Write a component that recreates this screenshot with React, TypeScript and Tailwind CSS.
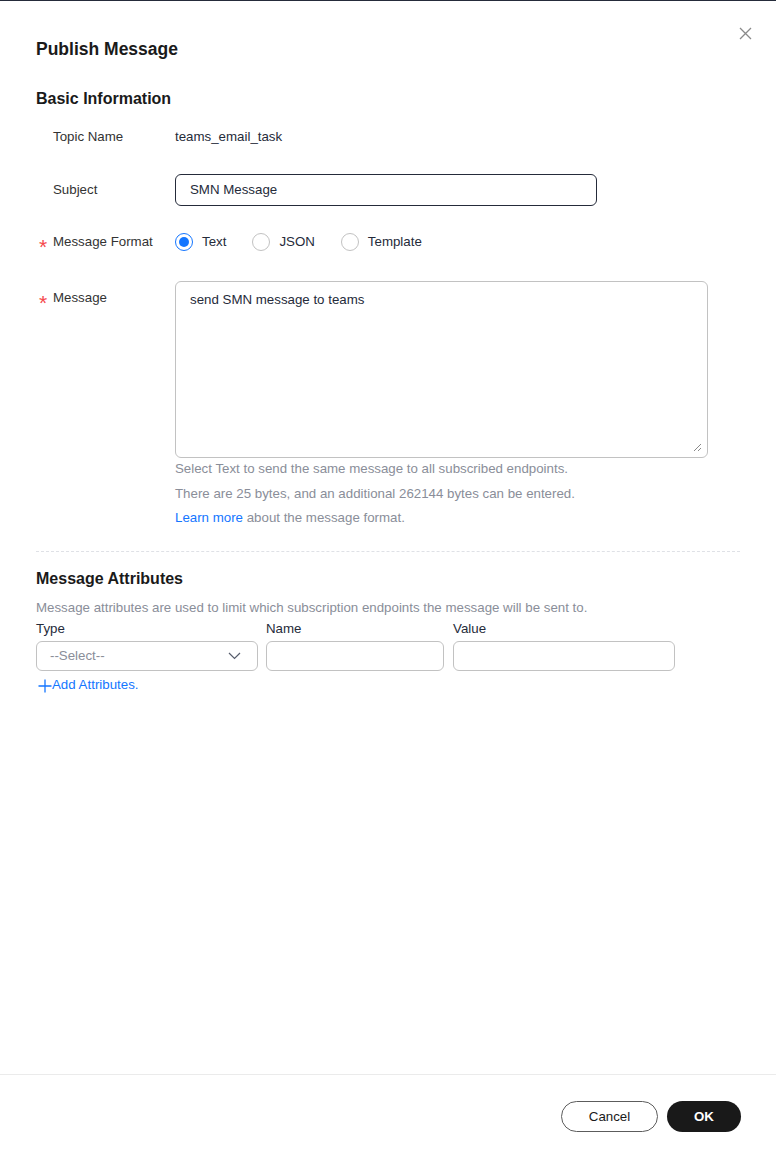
import React from 'react';

const font = { fontFamily: '"Liberation Sans", Arial, sans-serif' };

function Radio({ label, checked }: { label: string; checked?: boolean }) {
    return (
        <label className="flex items-center gap-[9px] mr-[26px]">
            <span
                className={
                    checked
                        ? 'w-[18px] h-[18px] rounded-full border border-[#1476ff] flex items-center justify-center bg-white'
                        : 'w-[18px] h-[18px] rounded-full border border-[#c2c2c2] bg-white'
                }
            >
                {checked && <span className="w-[10px] h-[10px] rounded-full bg-[#1476ff]" />}
            </span>
            <span className="text-[13.3px] text-[#252b3a]">{label}</span>
        </label>
    );
}

function FieldLabel({ text, required }: { text: string; required?: boolean }) {
    return (
        <div className="w-[139px] shrink-0 flex items-center pl-[3px] text-[13.3px] text-[#333]">
            <span className="w-[14px] h-[18px] text-[#f5484b] text-[21px] leading-none pt-[3px]">{required ? '*' : ''}</span>
            <span>{text}</span>
        </div>
    );
}

export default function App() {
    return (
        <div className="w-[776px] h-[1167px] bg-white border-t border-[#252b3a] flex flex-col relative" style={font}>
            {/* Close */}
            <button className="absolute left-[739px] top-[26px] w-[13px] h-[13px]">
                <svg width="13" height="13" viewBox="0 0 13 13" fill="none">
                    <path d="M1 1L12 12M12 1L1 12" stroke="#8a8a8a" strokeWidth="1.3" />
                </svg>
            </button>

            <div className="flex-1 px-9">
                <h1 className="mt-[36px] text-[17.5px] leading-6 font-bold text-[#1a1a1a]">Publish Message</h1>

                <h2 className="mt-[26px] text-[16px] leading-6 font-bold text-[#1a1a1a]">Basic Information</h2>

                {/* Topic name */}
                <div className="mt-[10px] flex h-8 items-center">
                    <FieldLabel text="Topic Name" />
                    <span className="text-[13.3px] text-[#252b3a]">teams_email_task</span>
                </div>

                {/* Subject */}
                <div className="mt-[21px] flex h-8 items-center">
                    <FieldLabel text="Subject" />
                    <div className="w-[422px] h-8 rounded-[6px] border border-[#252b3a] flex items-center px-[14px] text-[13.3px] text-[#252b3a]">
                        SMN Message
                    </div>
                </div>

                {/* Format */}
                <div className="mt-[20px] flex h-8 items-center">
                    <FieldLabel text="Message Format" required />
                    <Radio label="Text" checked />
                    <Radio label="JSON" />
                    <Radio label="Template" />
                </div>

                {/* Message */}
                <div className="mt-[23px] flex">
                    <div className="pt-[7px]">
                        <FieldLabel text="Message" required />
                    </div>
                    <div className="flex-1">
                        <div className="w-[533px] h-[177px] rounded-[6px] border border-[#c2c2c2] relative px-[14px] py-[8px] text-[13.3px] text-[#252b3a]">
                            send SMN message to teams
                            <svg className="absolute right-[5px] bottom-[5px]" width="9" height="9" viewBox="0 0 9 9">
                                <path d="M8 1L1 8M8 5L5 8" stroke="#8a8a8a" strokeWidth="1" />
                            </svg>
                        </div>
                        <div className="text-[13.3px] text-[#8a8e99]">
                            <p className="leading-5 mt-[1px]">Select Text to send the same message to all subscribed endpoints.</p>
                            <p className="leading-5 mt-[5px]">There are 25 bytes, and an additional 262144 bytes can be entered.</p>
                            <p className="leading-5 mt-[4px]">
                                <span className="text-[#1476ff]">Learn more</span> about the message format.
                            </p>
                        </div>
                    </div>
                </div>

                <div className="mt-[23px] border-t border-dashed border-[#dfe1e6]" />

                <h2 className="mt-[15px] text-[16px] leading-6 font-bold text-[#1a1a1a]">Message Attributes</h2>
                <p className="mt-[8px] text-[13.3px] leading-[18px] text-[#8a8e99]">
                    Message attributes are used to limit which subscription endpoints the message will be sent to.
                </p>

                <div className="mt-[3px] flex gap-[8px]">
                    <div className="w-[222px]">
                        <div className="text-[13.3px] leading-[18px] text-[#252b3a]">Type</div>
                        <div className="mt-[3px] h-[30px] rounded-[6px] border border-[#c2c2c2] flex items-center justify-between pl-[13px] pr-[16px] text-[13.3px] text-[#8a8e99]">
                            --Select--
                            <svg width="13" height="8" viewBox="0 0 13 8" fill="none">
                                <path d="M1 1L6.5 6.5L12 1" stroke="#575d6c" strokeWidth="1.2" />
                            </svg>
                        </div>
                    </div>
                    <div className="w-[178px]">
                        <div className="text-[13.3px] leading-[18px] text-[#252b3a]">Name</div>
                        <div className="mt-[3px] h-[30px] rounded-[6px] border border-[#c2c2c2]" />
                    </div>
                    <div className="w-[222px] ml-[1px]">
                        <div className="text-[13.3px] leading-[18px] text-[#252b3a]">Value</div>
                        <div className="mt-[3px] h-[30px] rounded-[6px] border border-[#c2c2c2]" />
                    </div>
                </div>

                <div className="mt-[5px] flex items-center text-[13.3px] leading-[18px] text-[#1476ff] pl-[2px]">
                    <svg width="14" height="14" viewBox="0 0 14 14" className="mt-[2px]">
                        <path d="M7 0.5V13.5M0.5 7H13.5" stroke="#1476ff" strokeWidth="1.3" />
                    </svg>
                    <span>Add Attributes.</span>
                </div>
            </div>

            {/* Footer */}
            <div className="h-[93px] border-t border-[#ebebeb] flex justify-end items-start pt-[26px] pr-[35px] gap-[9px]">
                <button className="w-[97px] h-[31px] rounded-full border border-[#5c5c5c] text-[13.3px] text-[#1a1a1a] bg-white">
                    Cancel
                </button>
                <button className="w-[74px] h-[31px] rounded-full bg-[#191919] text-[13.3px] font-bold text-white">
                    OK
                </button>
            </div>
        </div>
    );
}
